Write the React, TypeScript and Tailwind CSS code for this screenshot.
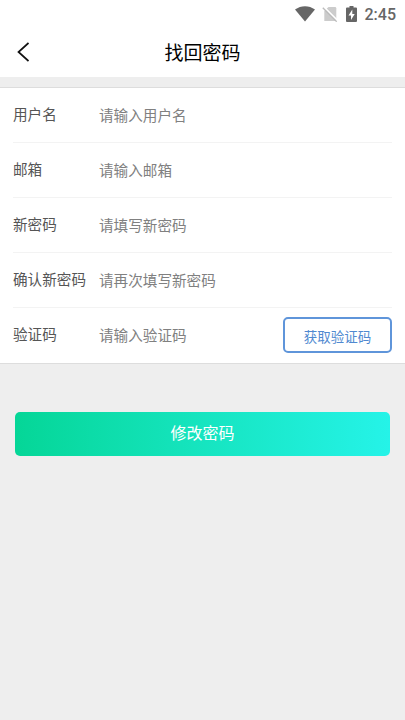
interface Field {
    label: string;
    placeholder: string;
}

const fields: Field[] = [
    { label: '用户名', placeholder: '请输入用户名' },
    { label: '邮箱', placeholder: '请输入邮箱' },
    { label: '新密码', placeholder: '请填写新密码' },
    { label: '确认新密码', placeholder: '请再次填写新密码' },
    { label: '验证码', placeholder: '请输入验证码' },
];

function StatusBar() {
    return (
        <div className="flex h-7 items-center justify-end pr-[9px] text-[#666]">
            <svg className="h-4 w-5" viewBox="0 0 20 16" fill="currentColor">
                <path d="M0 3.5C6-1 14-1 20 3.5L10 15.5z" />
            </svg>
            {/* No SIM */}
            <svg className="ml-[7px] h-4 w-4" viewBox="0 0 16 16">
                <path d="M6.5 1H13q1.3 0 1.3 1.3V15H2.3V5z" fill="#ccc" />
                <path d="M1.8 .8L16 15" stroke="#fff" strokeWidth="1.8" />
                <path d="M.8 1.8L14.7 15.7" stroke="#bbb" strokeWidth="1.3" />
            </svg>
            <svg className="ml-2 h-4 w-[11px]" viewBox="0 0 11 16">
                <path d="M3.5 0h4v1.500H10q1 0 1 1V15q0 1-1 1H1q-1 0-1-1V2.500q0-1 1-1h2.500z" fill="currentColor" />
                <path d="M6.3 3.5L2.5 9.5H5V14l3.700-6H6.300z" fill="#fff" />
            </svg>
            <span className="ml-2 pt-0.5 font-['Roboto',sans-serif] text-base font-medium">2:45</span>
        </div>
    );
}

export default function App() {
    return (
        <div className="flex h-screen flex-col bg-[#eee] font-['Noto_Sans_CJK_SC',sans-serif]">
            <header className="h-[77px] bg-white">
                <StatusBar />
                <div className="relative flex h-12 items-center justify-center">
                    <svg className="absolute top-[14px] left-[17px] h-5 w-3" viewBox="0 0 12 20" fill="none" stroke="#111" strokeWidth="1.7">
                        <path d="M11.5 1L1.5 10l10 9" />
                    </svg>
                    <h1 className="text-[19px] text-black">找回密码</h1>
                </div>
            </header>

            <main>
                <div className="mt-[10px] border-y border-[#ddd] bg-white px-[13px]">
                    {fields.map((field) => (
                        <div key={field.label} className="flex h-[55px] items-center border-b border-[#f3f3f3] text-[14.6px] last:border-transparent">
                            <span className="w-[86px] pb-[3px] text-[#555]">{field.label}</span>
                            <span className="text-[#808080]">{field.placeholder}</span>
                            {field.label === '验证码' && (
                                <button className="ml-auto h-9 w-[109px] rounded-[5px] border-2 border-[#5f95da] pt-[3px] text-[13.5px] text-[#5089d0]">
                                    获取验证码
                                </button>
                            )}
                        </div>
                    ))}
                </div>
                <button className="mx-[15px] mt-12 h-11 w-[375px] rounded-[5px] bg-linear-to-r from-[#05d697] to-[#25f3e8] pb-[5px] text-base text-white">
                    修改密码
                </button>
            </main>
        </div>
    );
}
